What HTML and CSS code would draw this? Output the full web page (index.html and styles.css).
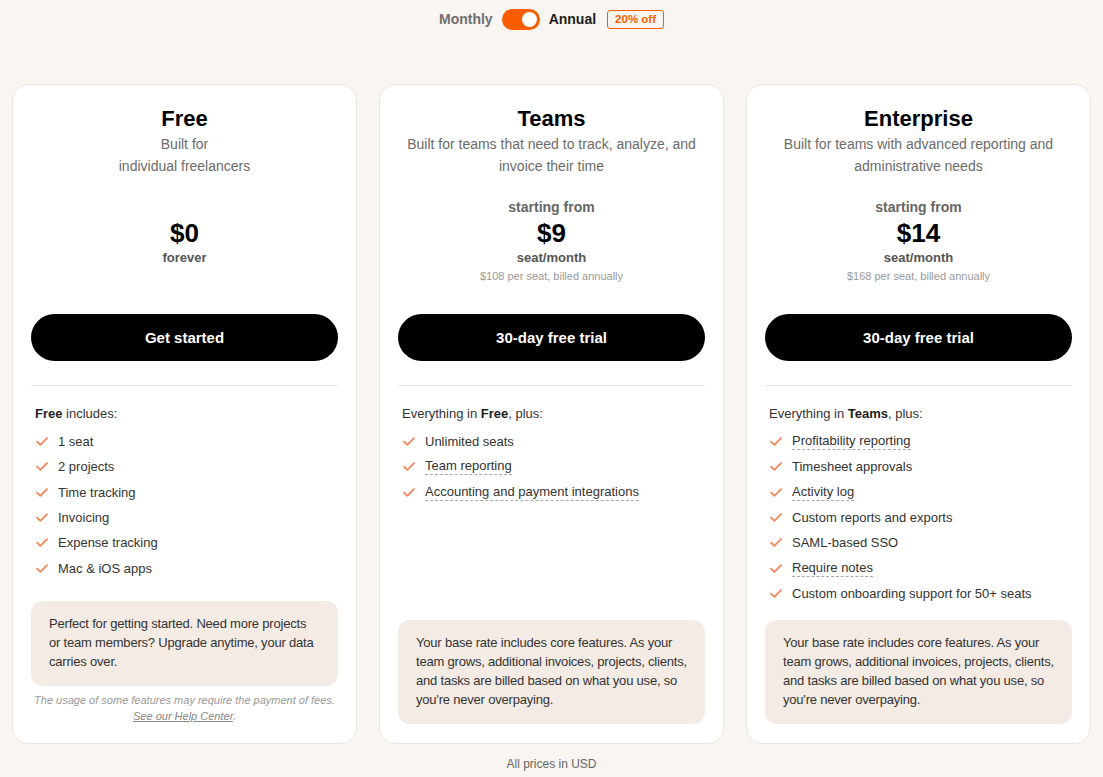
FILE: index.html
```html
<!DOCTYPE html>
<html>
	<head>
		<meta charset="utf-8" />
		<title>Pricing</title>
		<link rel="stylesheet" href="styles.css">
	</head>
	<body>
		<div class="billing">
			<span class="billing_label">Monthly</span>
			<span class="switch"><span class="knob"></span></span>
			<span class="billing_label active">Annual</span>
			<span class="badge">20% off</span>
		</div>

		<div class="plans">
			<!-- free -->
			<div class="card">
				<h2>Free</h2>
				<p class="sub">Built for<br>individual freelancers</p>
				<div class="price">
					<div class="from hidden">starting from</div>
					<div class="amount">$0</div>
					<div class="per">forever</div>
				</div>
				<a class="btn" href="#">Get started</a>
				<div class="features">
					<p class="lead"><b>Free</b> includes:</p>
					<ul>
						<li><i class="check"></i><span>1 seat</span></li>
						<li><i class="check"></i><span>2 projects</span></li>
						<li><i class="check"></i><span>Time tracking</span></li>
						<li><i class="check"></i><span>Invoicing</span></li>
						<li><i class="check"></i><span>Expense tracking</span></li>
						<li><i class="check"></i><span>Mac &amp; iOS apps</span></li>
					</ul>
				</div>
				<div class="bottom">
					<div class="note">Perfect for getting started. Need more projects or team members? Upgrade anytime, your data carries over.</div>
					<p class="fine">The usage of some features may require the payment of fees.<br><a href="#">See our Help Center</a>.</p>
				</div>
			</div>

			<!-- teams -->
			<div class="card">
				<h2>Teams</h2>
				<p class="sub">Built for teams that need to track, analyze, and invoice their time</p>
				<div class="price">
					<div class="from">starting from</div>
					<div class="amount">$9</div>
					<div class="per">seat/month</div>
					<div class="billed">$108 per seat, billed annually</div>
				</div>
				<a class="btn" href="#">30-day free trial</a>
				<div class="features">
					<p class="lead">Everything in <b>Free</b>, plus:</p>
					<ul>
						<li><i class="check"></i><span>Unlimited seats</span></li>
						<li><i class="check"></i><span class="tip">Team reporting</span></li>
						<li><i class="check"></i><span class="tip">Accounting and payment integrations</span></li>
					</ul>
				</div>
				<div class="bottom">
					<div class="note">Your base rate includes core features. As your team grows, additional invoices, projects, clients, and tasks are billed based on what you use, so you're never overpaying.</div>
				</div>
			</div>

			<!-- enterprise -->
			<div class="card">
				<h2>Enterprise</h2>
				<p class="sub">Built for teams with advanced reporting and administrative needs</p>
				<div class="price">
					<div class="from">starting from</div>
					<div class="amount">$14</div>
					<div class="per">seat/month</div>
					<div class="billed">$168 per seat, billed annually</div>
				</div>
				<a class="btn" href="#">30-day free trial</a>
				<div class="features">
					<p class="lead">Everything in <b>Teams</b>, plus:</p>
					<ul>
						<li><i class="check"></i><span class="tip">Profitability reporting</span></li>
						<li><i class="check"></i><span>Timesheet approvals</span></li>
						<li><i class="check"></i><span class="tip">Activity log</span></li>
						<li><i class="check"></i><span>Custom reports and exports</span></li>
						<li><i class="check"></i><span>SAML-based SSO</span></li>
						<li><i class="check"></i><span class="tip">Require notes</span></li>
						<li><i class="check"></i><span>Custom onboarding support for 50+ seats</span></li>
					</ul>
				</div>
				<div class="bottom">
					<div class="note">Your base rate includes core features. As your team grows, additional invoices, projects, clients, and tasks are billed based on what you use, so you're never overpaying.</div>
				</div>
			</div>
		</div>

		<p class="currency">All prices in USD</p>
	</body>
</html>
```

FILE: styles.css
```css
html,body,div,span,h2,p,a,ul,li,b,i{margin:0;padding:0;border:0;font-size:100%;}
ul{list-style:none}
a{color:inherit;text-decoration:none}
body{font-family:"Liberation Sans",Arial,sans-serif;color:#1d1d1b;background:#f9f5f0;}

/* billing switch */
.billing{display:flex;align-items:center;justify-content:center;padding-top:8px;height:22px;}
.billing_label{font-size:14px;font-weight:bold;color:#6f6f6f;}
.billing_label.active{color:#1d1d1b;}
.switch{width:38px;height:21px;border-radius:11px;background:#fa5d00;margin:0 9px;display:flex;align-items:center;justify-content:flex-end;padding-right:3px;box-sizing:border-box;}
.knob{width:15px;height:15px;border-radius:50%;background:#fff;}
.badge{margin-left:11px;border:1px solid #fa5d00;color:#fa5d00;font-size:11.5px;font-weight:bold;border-radius:3px;padding:2px 7px;line-height:13px;}

/* cards */
.plans{display:grid;grid-template-columns:repeat(3,345px);gap:22px;padding:0 12px;margin-top:54px;}
.card{background:#fff;border:1px solid #ebe6df;border-radius:16px;padding:20px 18px 19px;display:flex;flex-direction:column;text-align:center;}
.card h2{font-size:22px;line-height:28px;font-weight:bold;color:#000;}
.sub{font-size:14px;line-height:22px;color:#6b6b6b;padding:0 8px;}
.price{margin-top:20px;height:96px;}
.from{font-size:14px;line-height:20px;color:#666;font-weight:bold;}
.hidden{visibility:hidden;}
.amount{font-size:26px;line-height:32px;font-weight:bold;color:#000;}
.per{font-size:13px;line-height:17px;color:#555;font-weight:bold;}
.billed{font-size:11px;line-height:21px;color:#9a9a9a;}
.btn{display:block;height:47px;line-height:47px;border-radius:24px;background:#000;color:#fff;font-size:15px;font-weight:bold;margin-top:21px;}

.features{border-top:1px solid #e6e6e6;margin-top:24px;padding:18px 4px 0;text-align:left;font-size:13px;color:#333;}
.lead{line-height:20px;}
.lead b{color:#1d1d1b;}
.features ul{margin-top:5px;}
.features li{display:flex;align-items:center;height:25.3px;}
.check{width:12px;height:9px;margin-right:10px;margin-left:1px;flex:none;
	background:no-repeat center/12px 9px url("data:image/svg+xml,%3Csvg xmlns='http://www.w3.org/2000/svg' viewBox='0 0 12 9'%3E%3Cpath d='M1 4.6l3.4 3.3L11 1.2' fill='none' stroke='%23f5855a' stroke-width='1.8' stroke-linecap='round' stroke-linejoin='round'/%3E%3C/svg%3E");}
.tip{border-bottom:1px dashed #a8a8a8;line-height:16px;}

.bottom{margin-top:auto;padding-top:14px;}
.note{background:#f3ebe4;border-radius:12px;padding:13px 18px 15px;text-align:left;font-size:13px;line-height:19px;color:#333;letter-spacing:-0.2px;}
.fine{font-size:11px;line-height:16px;font-style:italic;color:#9a9a9a;margin-top:6px;}
.fine a{text-decoration:underline;color:#888;}

.currency{text-align:center;font-size:12px;color:#666;line-height:16px;margin-top:12px;}
```
